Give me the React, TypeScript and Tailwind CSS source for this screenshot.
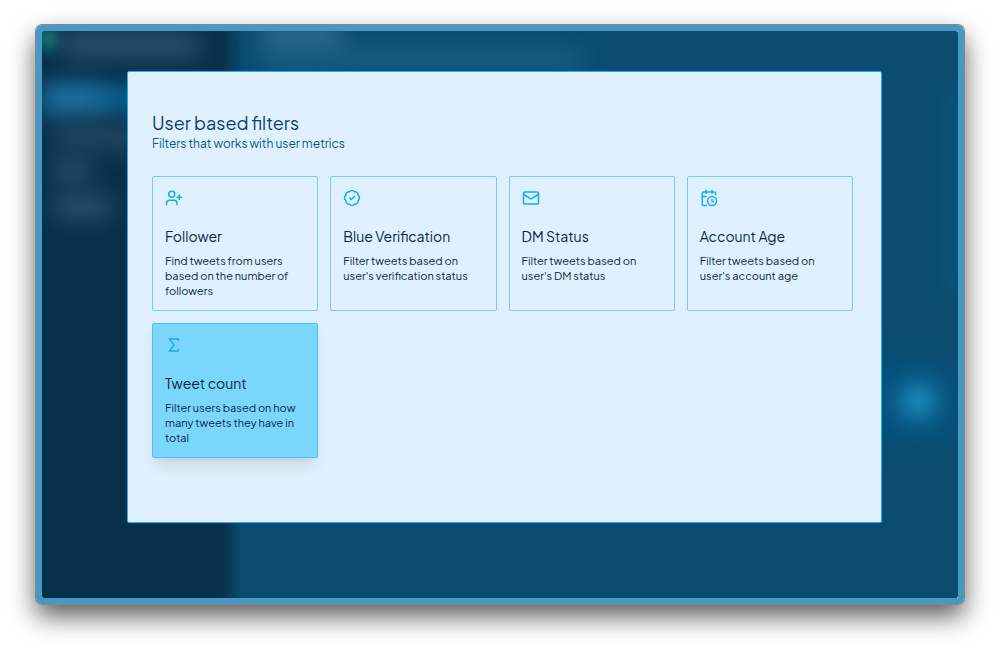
import { BadgeCheck, CalendarClock, Mail, UserPlus } from "lucide-react";

type FilterType = {
  title: string;
  description: string;
  icon: React.ReactNode;
  active?: boolean;
};

type FilterCardProps = {
  filter: FilterType;
};

const SigmaIcon = () => (
  <svg
    width="18"
    height="18"
    viewBox="0 0 24 24"
    fill="none"
    stroke="currentColor"
    strokeWidth="1.75"
    aria-hidden="true"
  >
    <path d="M18 7V4H6l6 8-6 8h12v-3" />
  </svg>
);

const filters: FilterType[] = [
  {
    title: "Follower",
    description: "Find tweets from users based on the number of followers",
    icon: <UserPlus size={18} />,
  },
  {
    title: "Blue Verification",
    description: "Filter tweets based on user's verification status",
    icon: <BadgeCheck size={18} />,
  },
  {
    title: "DM Status",
    description: "Filter tweets based on user's DM status",
    icon: <Mail size={18} />,
  },
  {
    title: "Account Age",
    description: "Filter tweets based on user's account age",
    icon: <CalendarClock size={18} />,
  },
  {
    title: "Tweet count",
    description: "Filter users based on how many tweets they have in total",
    icon: <SigmaIcon />,
    active: true,
  },
];

const FilterCard: React.FC<FilterCardProps> = ({ filter }) => {
  return (
    <button
      type="button"
      className={`flex flex-col items-start rounded-xs border p-3 text-left text-[#06273f] ${
        filter.active
          ? "border-[#4cc0f8] bg-[#7bd6fe] shadow-lg"
          : "border-[#6dcdfb]"
      }`}
    >
      <span className="text-[#12aef0]">{filter.icon}</span>
      <span className="mt-[17px] text-sm leading-6">{filter.title}</span>
      <span className="mt-[5px] text-[11px] leading-[15px]">
        {filter.description}
      </span>
    </button>
  );
};

// Dimmed app behind the dialog
const Backdrop = () => {
  return (
    <div
      aria-hidden="true"
      className="absolute inset-0 flex overflow-hidden rounded-xs bg-[#0b4c70]"
    >
      <div className="flex w-[200px] shrink-0 flex-col bg-linear-to-r from-[#08304a] from-90% to-[#0b4c70]">
        <div className="flex items-start gap-2">
          <div className="h-4 w-3 bg-[#1fc79a] blur-sm" />
          <div className="mt-1 h-5 w-34 bg-[#34597a] blur-md" />
        </div>
        <div className="mt-7 flex h-8 items-center bg-[#075985] blur-sm">
          <div className="ml-1 h-5 w-14 bg-[#2f7cac] blur-md" />
        </div>
        <div className="mt-3 ml-3 h-5 w-24 bg-[#264d69] blur-md" />
        <div className="mt-4 ml-3 h-4 w-9 bg-[#37607d] blur-md" />
        <div className="mt-5 ml-3 h-4 w-14 bg-[#37607d] blur-md" />
      </div>
      <div className="flex min-w-0 grow flex-col">
        <div className="ml-5 h-3 w-20 bg-[#5a8cab] blur-md" />
        <div className="mt-2 ml-5 h-4 w-80 bg-[#21668c] blur-md" />
        <div className="mt-5 h-52 w-2 self-end bg-[#075985] blur-sm" />
        <div className="mt-17 flex h-19 items-center justify-end bg-[#05527d] pr-6 blur-md">
          <div className="size-8 rounded-full bg-[#25a0d6]" />
        </div>
      </div>
    </div>
  );
};

const App = () => {
  return (
    <div className="min-h-screen bg-white px-9 pt-[25px] pb-12 font-['Plus_Jakarta_Sans',Inter,sans-serif]">
      <div className="rounded-md border-6 border-[#4799c3] shadow-[0_0_0_1px_#85888b,0_12px_26px_rgba(0,0,0,0.65)]">
        <div className="relative pt-10 pr-[76px] pb-[75px] pl-[85px]">
          <Backdrop />
          <section
            role="dialog"
            aria-labelledby="filters-title"
            className="relative rounded-xs border border-[#1cb0f6] bg-[#dff1fe] pt-[38px] pr-7 pb-16 pl-6"
          >
            <h1
              id="filters-title"
              className="text-lg leading-[26px] text-[#0a3f66]"
            >
              User based filters
            </h1>
            <p className="text-xs leading-4 text-[#075985]">
              Filters that works with user metrics
            </p>
            <div className="mt-6 grid grid-cols-4 gap-3">
              {filters.map((filter) => (
                <FilterCard key={filter.title} filter={filter} />
              ))}
            </div>
          </section>
        </div>
      </div>
    </div>
  );
};

export default App;
